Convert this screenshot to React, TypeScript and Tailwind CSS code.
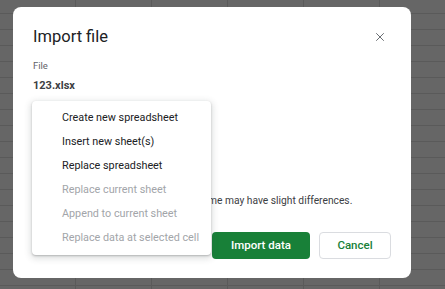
import { X } from 'lucide-react';

const importOptions = [
  { label: 'Create new spreadsheet', disabled: false },
  { label: 'Insert new sheet(s)', disabled: false },
  { label: 'Replace spreadsheet', disabled: false },
  { label: 'Replace current sheet', disabled: true },
  { label: 'Append to current sheet', disabled: true },
  { label: 'Replace data at selected cell', disabled: true },
];

function LocationMenu() {
  return (
    <ul
      role="listbox"
      aria-label="Import location"
      className="absolute left-[19px] top-[94px] w-[179px] rounded-[4px] bg-white py-[5px] shadow-[0_1px_2px_rgba(60,64,67,0.3),0_2px_6px_2px_rgba(60,64,67,0.15)]"
    >
      {importOptions.map((opt) => (
        <li
          key={opt.label}
          role="option"
          aria-disabled={opt.disabled}
          className={
            opt.disabled
              ? 'flex h-[24px] items-center pl-[30px] text-[10.8px] text-[#a2a5a9]'
              : 'flex h-[24px] items-center pl-[30px] text-[10.8px] text-[#202124]'
          }
        >
          {opt.label}
        </li>
      ))}
    </ul>
  );
}

export default function App() {
  return (
    <div className="h-[289px] w-[445px] overflow-hidden bg-[#666666] bg-[linear-gradient(to_right,#5a5a5a_1px,transparent_1px),linear-gradient(to_bottom,#5a5a5a_1px,transparent_1px)] bg-[length:76px_16px] bg-[position:75px_13px] pl-[13px] pt-[7px] font-['Roboto',sans-serif]">
      <div
        role="dialog"
        aria-label="Import file"
        className="relative flex h-[271px] w-[398px] flex-col rounded-[8px] bg-white px-[20px] pb-[19px] pt-[18px]"
      >
        <div className="flex h-[24px] items-center justify-between">
          <h2 className="text-[16.5px] leading-[24px] text-[#202124]">Import file</h2>
          <button
            aria-label="Close"
            className="-mr-[1px] flex h-[24px] w-[24px] items-center justify-center text-[#5f6368]"
          >
            <X size={14} strokeWidth={1.6} />
          </button>
        </div>

        <div className="mt-[11px] text-[9.5px] leading-[12px] text-[#5f6368]">File</div>
        <div className="mt-[6px] text-[11px] font-bold leading-[16px] text-[#3c4043]">123.xlsx</div>

        {/* select that the open menu covers */}
        <div className="mt-[14px] h-[28px] w-[160px] rounded-[4px] border border-[#dadce0]" />

        <p className="mt-[57px] text-[10.25px] leading-[16px] text-[#3c4043]">
          Data imported from the file, and the name may have slight differences.
        </p>

        <div className="mt-auto flex justify-end gap-[9px]">
          <button className="h-[27px] w-[98px] rounded-[4px] bg-[#188038] text-[11.5px] font-medium text-white">
            Import data
          </button>
          <button className="h-[27px] w-[72px] rounded-[4px] border border-[#dadce0] bg-white text-[11.5px] font-medium text-[#188038]">
            Cancel
          </button>
        </div>

        <LocationMenu />
      </div>
    </div>
  );
}
